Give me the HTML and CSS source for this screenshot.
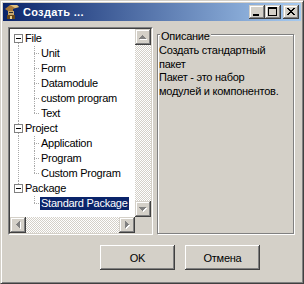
FILE: index.html
```html
<!DOCTYPE html>
<html lang="ru">
<head>
  <meta charset="UTF-8">
  <title>Создать ...</title>
  <meta name="viewport" content="width=device-width, initial-scale=1.0">
  <link rel="stylesheet" href="styles.css">
</head>
<body>
  <div class="window">
    <div class="titlebar">
      <svg class="app-icon" viewBox="0 0 16 16" width="16" height="16">
        <path d="M1 5L6 1h7l2 2-6 2v2H4z" fill="#a87838"/>
        <path d="M6 1h7l2 2-4 1z" fill="#e0c080"/>
        <path d="M4 7h6v4H4z" fill="#c8a870"/>
        <path d="M5 8h4v1H5z" fill="#303030"/>
        <path d="M3 11h8v4H3z" fill="#684818"/>
        <path d="M6 12h2v3H6z" fill="#e8d090"/>
      </svg>
      <span class="title">Создать ...</span>
      <div class="caption-btns">
        <button class="cap-btn"><svg viewBox="0 0 16 14" width="16" height="14"><path d="M4 9h6v2H4z"/></svg></button>
        <button class="cap-btn"><svg viewBox="0 0 16 14" width="16" height="14"><path d="M3 2h9v2H3zM3 4h1v6H3zM11 4h1v6h-1zM3 10h9v1H3z"/></svg></button>
        <button class="cap-btn close"><svg viewBox="0 0 16 14" width="16" height="14"><path d="M4 3h2v1H4zM10 3h2v1h-2zM5 4h2v1H5zM9 4h2v1H9zM6 5h4v1H6zM7 6h2v1H7zM6 7h4v1H6zM5 8h2v1H5zM9 8h2v1H9zM4 9h2v1H4zM10 9h2v1h-2z"/></svg></button>
      </div>
    </div>

    <div class="content">
      <div class="panes">
        <div class="tree">
          <div class="tree-inner">
            <ul class="tree-list">
              <li class="node">
                <div class="row root"><span class="toggle"></span><span class="label">File</span></div>
                <ul class="children">
                  <li class="row leaf"><span class="label">Unit</span></li>
                  <li class="row leaf"><span class="label">Form</span></li>
                  <li class="row leaf"><span class="label">Datamodule</span></li>
                  <li class="row leaf"><span class="label">custom program</span></li>
                  <li class="row leaf"><span class="label">Text</span></li>
                </ul>
              </li>
              <li class="node">
                <div class="row root"><span class="toggle"></span><span class="label">Project</span></div>
                <ul class="children">
                  <li class="row leaf"><span class="label">Application</span></li>
                  <li class="row leaf"><span class="label">Program</span></li>
                  <li class="row leaf"><span class="label">Custom Program</span></li>
                </ul>
              </li>
              <li class="node">
                <div class="row root"><span class="toggle"></span><span class="label">Package</span></div>
                <ul class="children">
                  <li class="row leaf selected"><span class="label">Standard Package</span></li>
                </ul>
              </li>
            </ul>

            <div class="vscroll">
              <button class="sb-btn"><svg viewBox="0 0 16 16" width="16" height="16"><path class="shade" d="M8 7h1v1H8zM7 8h3v1H7zM6 9h5v1H6zM5 10h7v1H5z"/><path d="M7 6h1v1H7zM6 7h3v1H6zM5 8h5v1H5zM4 9h7v1H4z"/></svg></button>
              <div class="track"></div>
              <button class="sb-btn"><svg viewBox="0 0 16 16" width="16" height="16"><path class="shade" d="M5 7h7v1H5zM6 8h5v1H6zM7 9h3v1H7zM8 10h1v1H8z"/><path d="M4 6h7v1H4zM5 7h5v1H5zM6 8h3v1H6zM7 9h1v1H7z"/></svg></button>
            </div>

            <div class="hscroll">
              <button class="sb-btn"><svg viewBox="0 0 16 16" width="16" height="16"><path class="shade" d="M7 8h1v1H7zM8 7h1v3H8zM9 6h1v5H9zM10 5h1v7h-1z"/><path d="M6 7h1v1H6zM7 6h1v3H7zM8 5h1v5H8zM9 4h1v7H9z"/></svg></button>
              <div class="track"></div>
              <button class="sb-btn"><svg viewBox="0 0 16 16" width="16" height="16"><path class="shade" d="M7 5h1v7H7zM8 6h1v5H8zM9 7h1v3H9zM10 8h1v1h-1z"/><path d="M6 4h1v7H6zM7 5h1v5H7zM8 6h1v3H8zM9 7h1v1H9z"/></svg></button>
            </div>
            <div class="corner"></div>
          </div>
        </div>

        <div class="group">
          <div class="group-caption">Описание</div>
          <p class="group-text">Создать стандартный<br>пакет<br>Пакет - это набор<br>модулей и компонентов.</p>
        </div>
      </div>

      <div class="actions">
        <button class="btn">OK</button>
        <button class="btn">Отмена</button>
      </div>
    </div>
  </div>
</body>
</html>
```

FILE: styles.css
```css
:root {
  --face: #d4d0c8;
  --shadow: #808080;
  --dark: #404040;
  --light: #ffffff;
  --select: #0a246a;
  --dots-v: repeating-linear-gradient(to bottom, #a8a8a8 0 1px, transparent 1px 2px);
  --dots-h: repeating-linear-gradient(to right, #a8a8a8 0 1px, transparent 1px 2px);
}

* {
  box-sizing: border-box;
}

html, body {
  margin: 0;
  padding: 0;
}

body {
  font-family: "Liberation Sans", Arial, sans-serif;
  font-size: 11px;
  letter-spacing: -0.25px;
  color: #000;
  background: var(--face);
}

button {
  font: inherit;
  letter-spacing: inherit;
  color: inherit;
  padding: 0;
  border: none;
  margin: 0;
}

.window {
  width: 304px;
  height: 284px;
  display: flex;
  flex-direction: column;
  background: var(--face);
  border: 1px solid;
  border-color: var(--face) var(--dark) var(--dark) var(--face);
  box-shadow: inset 1px 1px var(--light), inset -1px -1px var(--shadow);
  padding: 2px;
}

/* title bar */
.titlebar {
  height: 18px;
  flex: none;
  display: flex;
  align-items: center;
  padding: 0 2px 0 1px;
  background: linear-gradient(to right, #0a246a, #a6caf0);
  color: #fff;
}

.app-icon {
  flex: none;
  display: block;
}

.title {
  flex: 1;
  margin-left: 3px;
  font-weight: bold;
  letter-spacing: 0.3px;
  white-space: nowrap;
}

.caption-btns {
  display: flex;
}

.cap-btn,
.sb-btn {
  display: block;
  background: var(--face);
  box-shadow: inset -1px -1px var(--dark), inset 1px 1px var(--face),
              inset -2px -2px var(--shadow), inset 2px 2px var(--light);
}

.cap-btn {
  width: 16px;
  height: 14px;
}

.cap-btn svg,
.sb-btn svg {
  display: block;
}

.cap-btn path {
  fill: #000;
}

.cap-btn.close {
  margin-left: 2px;
}

/* content */
.content {
  flex: 1;
  display: flex;
  flex-direction: column;
  padding: 6px 0 0 5px;
}

.panes {
  display: flex;
  gap: 4px;
  height: 208px;
}

.tree {
  width: 145px;
  border: 1px solid;
  border-color: var(--shadow) var(--light) var(--light) var(--shadow);
}

.tree-inner {
  height: 100%;
  display: grid;
  grid-template-columns: 1fr 16px;
  grid-template-rows: 1fr 16px;
  background: #fff;
  border: 1px solid;
  border-color: var(--dark) var(--face) var(--face) var(--dark);
}

.tree-list,
.children {
  list-style: none;
  margin: 0;
  padding: 0;
}

.tree-list {
  overflow: hidden;
  padding-top: 2px;
}

.row {
  height: 15px;
  display: flex;
  align-items: center;
  white-space: nowrap;
}

.label {
  display: inline-block;
  line-height: 13px;
  padding: 0 1px;
}

.selected .label {
  background: var(--select);
  color: #fff;
}

.toggle {
  width: 9px;
  height: 9px;
  flex: none;
  margin: 0 1px 0 4px;
  border: 1px solid var(--shadow);
  background: #fff linear-gradient(#000, #000) no-repeat 1px 3px / 5px 1px;
}

.root {
  background-image: var(--dots-v), var(--dots-v);
  background-repeat: no-repeat;
  background-position: 8px 0, 8px 12px;
  background-size: 1px 3px, 1px 3px;
}

.node:first-child > .root {
  background-size: 0 0, 1px 3px;
}

.node:last-child > .root {
  background-size: 1px 3px, 0 0;
}

.node:not(:last-child) > .children {
  background: var(--dots-v) no-repeat 8px 0 / 1px 100%;
}

.leaf {
  padding-left: 30px;
  background-image: var(--dots-v), var(--dots-h);
  background-repeat: no-repeat;
  background-position: 24px 0, 24px 7px;
  background-size: 1px 100%, 6px 1px;
}

.leaf:last-child {
  background-size: 1px 8px, 6px 1px;
}

/* scrollbars */
.vscroll,
.hscroll {
  display: flex;
  background: repeating-conic-gradient(var(--face) 0 25%, #fff 0 50%) 0 0 / 2px 2px;
}

.vscroll {
  flex-direction: column;
}

.track {
  flex: 1;
}

.sb-btn {
  width: 16px;
  height: 16px;
  flex: none;
}

.sb-btn path {
  fill: var(--shadow);
}

.sb-btn path.shade {
  fill: #fff;
}

.corner {
  background: var(--face);
}

/* description group */
.group {
  width: 137px;
  height: 200px;
  margin-top: 7px;
  padding: 0 1px;
  border: 1px solid var(--shadow);
  box-shadow: 1px 1px 0 var(--light), inset 1px 1px 0 var(--light);
}

.group-caption {
  width: fit-content;
  margin: -5px 0 0 1px;
  padding: 0 1px;
  line-height: 13px;
  background: var(--face);
}

.group-text {
  margin: 1px 0 0;
  line-height: 13.5px;
}

/* buttons */
.actions {
  display: flex;
  gap: 10px;
  margin-top: 10px;
  padding-left: 92px;
}

.btn {
  width: 75px;
  height: 25px;
  background: var(--face);
  box-shadow: inset -1px -1px var(--dark), inset 1px 1px var(--light),
              inset -2px -2px var(--shadow), inset 2px 2px var(--face);
}
```
